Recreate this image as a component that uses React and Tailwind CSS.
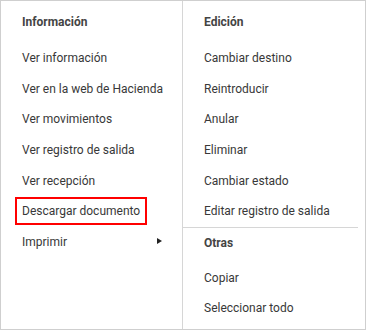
import React from 'react';

const leftItems = [
    'Ver información',
    'Ver en la web de Hacienda',
    'Ver movimientos',
    'Ver registro de salida',
    'Ver recepción',
];

const editItems = [
    'Cambiar destino',
    'Reintroducir',
    'Anular',
    'Eliminar',
    'Cambiar estado',
    'Editar registro de salida',
];

const otherItems = ['Copiar', 'Seleccionar todo'];

function Header({ children }) {
    return (
        <div className="h-[30px] flex items-center pl-[21px] font-bold text-[#444]">
            {children}
        </div>
    );
}

function Item({ children }) {
    return (
        <div className="h-[30.67px] flex items-center pl-[21px] text-[#383838]">
            {children}
        </div>
    );
}

export default function App() {
    return (
        <div
            className="w-[366px] h-[330px] bg-white border border-[#cfcfcf] flex text-[12px] whitespace-nowrap"
            style={{ fontFamily: 'Roboto, "Liberation Sans", sans-serif' }}
        >
            {/* Información */}
            <div className="w-[182px] pt-[6px] border-r border-[#d6d6d6]">
                <Header>Información</Header>
                <div className="mt-[5.67px]">
                    {leftItems.map(item => (
                        <Item key={item}>{item}</Item>
                    ))}
                    <div className="h-[30.67px] flex items-center pl-[14px]">
                        <div className="h-[28px] w-[132px] border-2 border-[#ff0000] flex items-center pl-[5px] text-[#383838]">
                            Descargar documento
                        </div>
                    </div>
                    <div className="h-[30.67px] flex items-center justify-between pl-[21px] pr-[20px] text-[#383838]">
                        <span>Imprimir</span>
                        <span className="w-0 h-0 border-y-[3.5px] border-y-transparent border-l-[5px] border-l-[#222] -mt-[2px]" />
                    </div>
                </div>
            </div>

            {/* Edición / Otras */}
            <div className="flex-1 pt-[6px]">
                <Header>Edición</Header>
                <div className="mt-[5.67px]">
                    {editItems.map(item => (
                        <Item key={item}>{item}</Item>
                    ))}
                </div>
                <div className="h-px bg-[#d6d6d6] mr-[7px]" />
                <Header>Otras</Header>
                <div className="mt-[4.67px]">
                    {otherItems.map(item => (
                        <Item key={item}>{item}</Item>
                    ))}
                </div>
            </div>
        </div>
    );
}
